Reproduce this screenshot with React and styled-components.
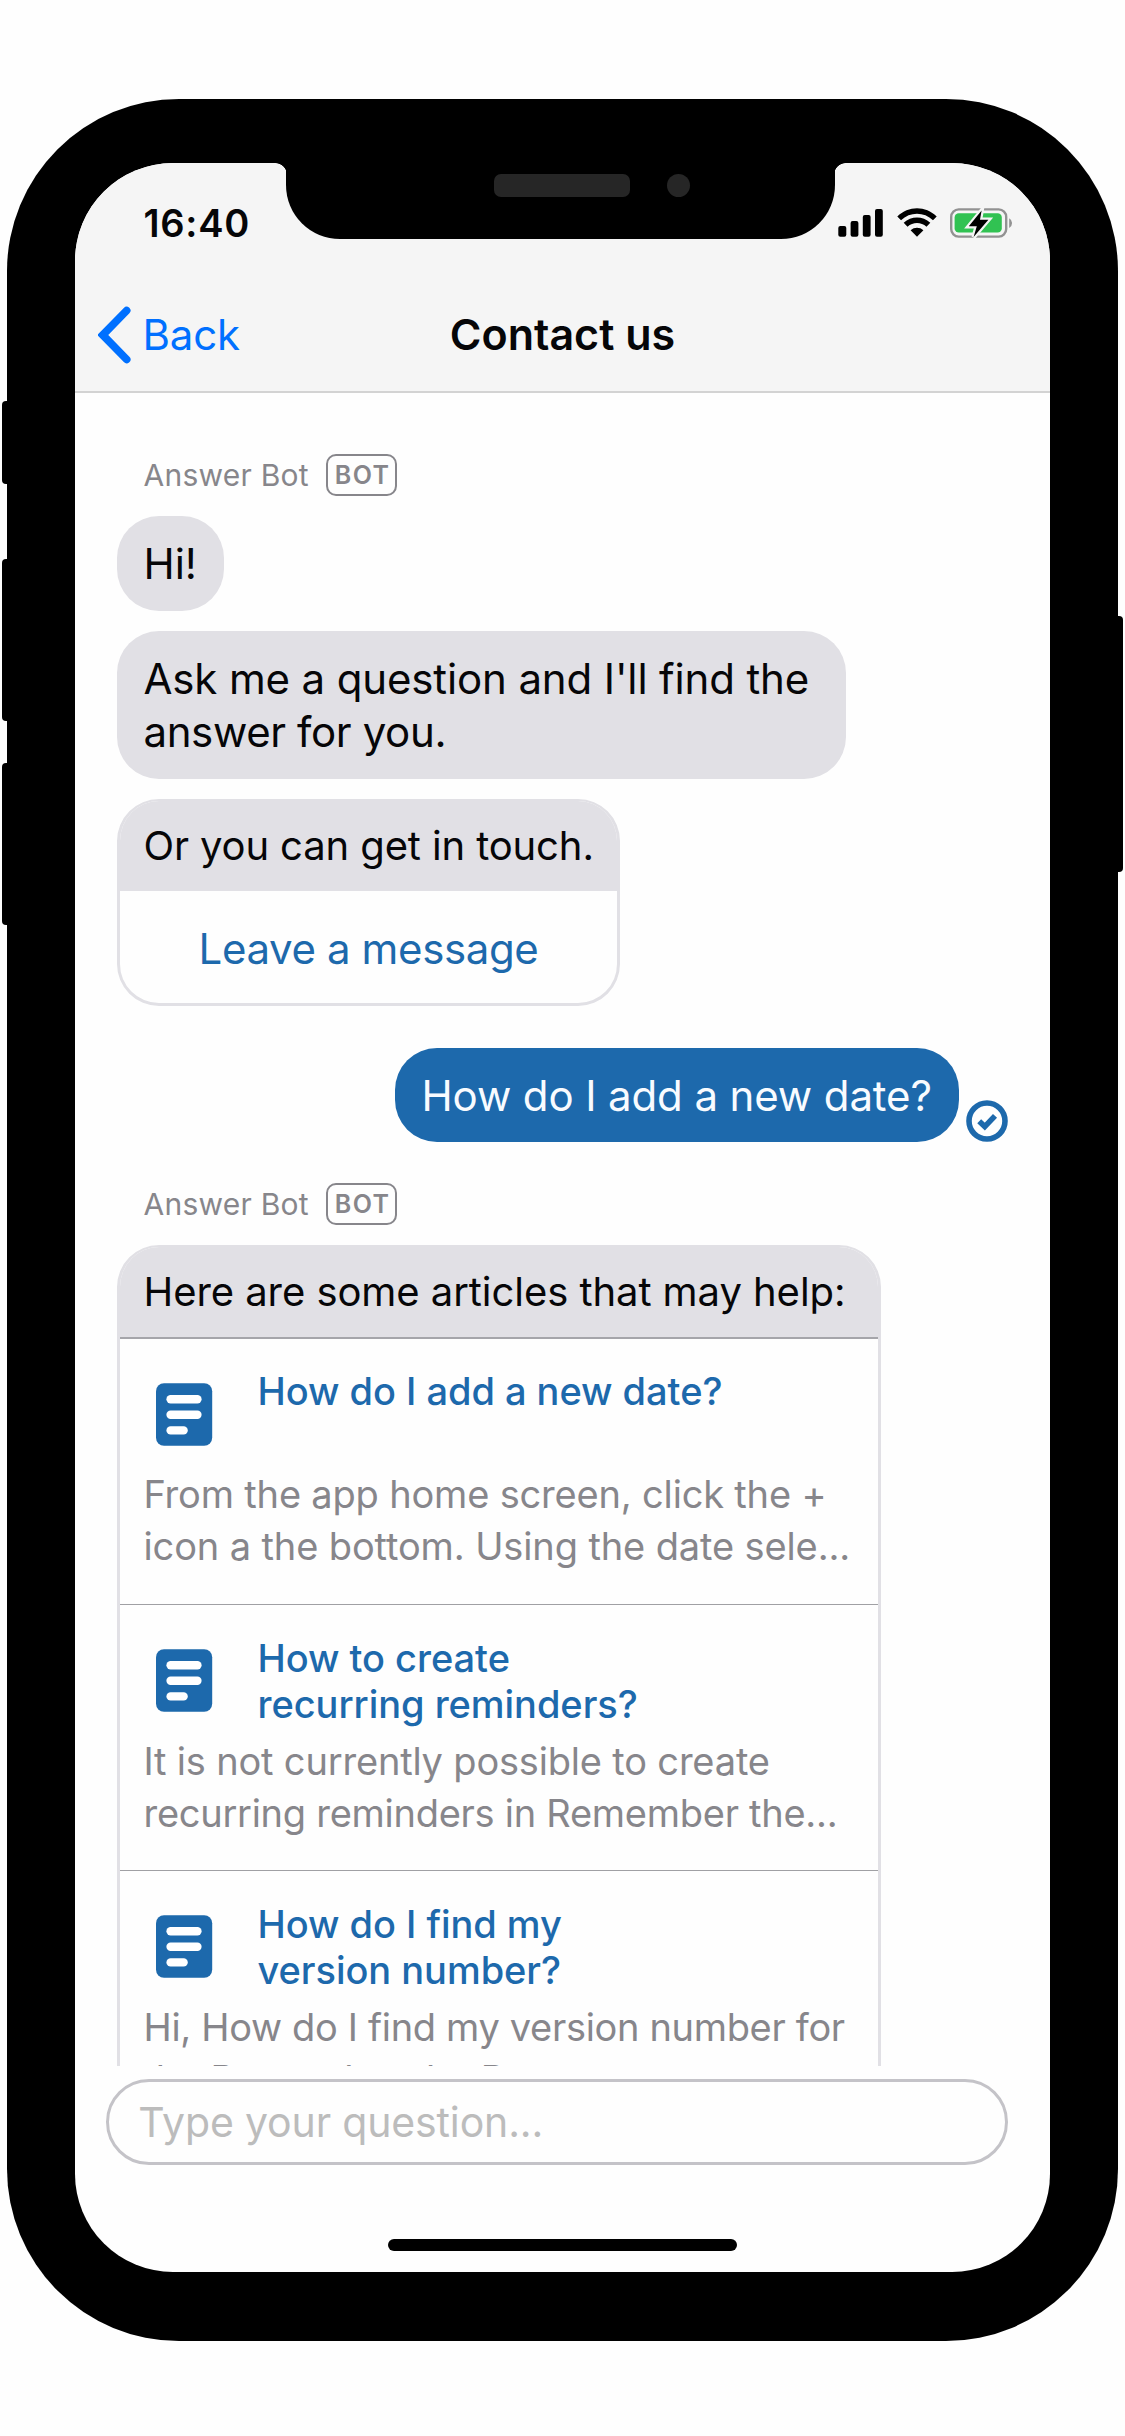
import React from "react";
import styled, { createGlobalStyle, css } from "styled-components";

const color = {
  ink: "#060608",
  link: "#1d69ac",
  system: "#0070ff",
  bubble: "#e1e0e5",
  muted: "#87868b",
  bar: "#f5f5f5",
  screen: "#fefefe",
};

const GlobalStyle = createGlobalStyle`
  *, *::before, *::after { box-sizing: border-box; }
  body {
    margin: 0;
    background: #fefefe;
    font-family: Inter, "Liberation Sans", sans-serif;
    color: ${color.ink};
  }
`;

/* ---------- device ---------- */

const Page = styled.main`
  display: flex;
  justify-content: center;
  align-items: flex-start;
  width: 1125px;
  height: 2436px;
  padding-top: 98.5px;
`;

const Phone = styled.div`
  position: relative;
  width: 1110.4px;
  height: 2242.5px;
  padding: 64.5px 68px 69px;
  background: #000;
  border-radius: 172px;
`;

const SideButton = styled.span`
  position: absolute;
  top: ${(p) => p.$top}px;
  ${(p) => p.$side}: -5.3px;
  width: 10px;
  height: ${(p) => p.$length}px;
  background: #000;
  border-radius: 4px;
`;

const Screen = styled.section`
  display: flex;
  flex-direction: column;
  height: 100%;
  background: ${color.screen};
  border-radius: 98px;
  overflow: hidden;
`;

/* ---------- top bar ---------- */

const TopBar = styled.header`
  flex: none;
  height: 230px;
  background: ${color.bar};
  border-bottom: 2px solid #d3d3d3;
`;

const StatusBar = styled.div`
  display: grid;
  grid-template-columns: 211.2px 548.5px 1fr;
  height: 95px;
`;

const Clock = styled.time`
  padding: 37px 0 0 68.2px;
  font-size: 38px;
  line-height: 46px;
  font-weight: 600;
  letter-spacing: 0.75px;
`;

const Notch = styled.div`
  position: relative;
  display: flex;
  gap: 37.5px;
  height: 75.5px;
  padding: 11px 0 0 208px;
  background: #000;
  border-radius: 0 0 54px 54px;

  &::before,
  &::after {
    content: "";
    position: absolute;
    top: 0;
    width: 12px;
    height: 12px;
  }
  &::before {
    left: -11.5px;
    background: radial-gradient(circle at 0 100%, transparent 11.5px, #000 12.2px);
  }
  &::after {
    right: -11.5px;
    background: radial-gradient(circle at 100% 100%, transparent 11.5px, #000 12.2px);
  }
`;

const Speaker = styled.span`
  width: 135.5px;
  height: 23px;
  border-radius: 7px;
  background: #262626;
`;

const Camera = styled.span`
  width: 23px;
  height: 23px;
  border-radius: 50%;
  background: #262626;
`;

const StatusIcons = styled.div`
  display: flex;
  align-items: flex-start;
  gap: 13px;
  padding: 45px 0 0 3.5px;

  svg {
    flex: none;
    display: block;
  }
`;

const NavBar = styled.nav`
  display: grid;
  grid-template-columns: 1fr auto 1fr;
  align-items: center;
  height: 133px;
  padding: 20px 22.7px 0;
`;

const BackLink = styled.a`
  display: flex;
  align-items: center;
  gap: 11.5px;
  color: ${color.system};
  font-size: 42px;
  line-height: 50px;
  letter-spacing: -0.2px;
`;

const NavTitle = styled.h1`
  margin: 0 0 1px;
  font-size: 43px;
  line-height: 49px;
  font-weight: 600;
  letter-spacing: 0;
`;

/* ---------- conversation ---------- */

const Conversation = styled.div`
  flex: none;
  display: flex;
  flex-direction: column;
  align-items: flex-start;
  height: 1673px;
  padding: 61px 41.7px 0;
  overflow: hidden;

  & > * {
    flex: none;
  }
`;

const Sender = styled.div`
  display: flex;
  align-items: center;
  gap: 17.5px;
  height: 41.5px;
  margin: ${(p) => (p.$later ? 41.5 : 0)}px 0 20.5px 26.5px;
  color: ${color.muted};
  font-size: 30px;
  line-height: 36px;
  letter-spacing: 0.25px;
`;

const BotTag = styled.span`
  width: 71px;
  height: 41.5px;
  border: 2.5px solid ${color.muted};
  border-radius: 10px;
  font-size: 25px;
  line-height: 38px;
  font-weight: 600;
  letter-spacing: 1.4px;
  text-indent: 1.4px;
  text-align: center;
`;

const bubbleText = css`
  font-size: 42px;
  line-height: 53px;
  white-space: nowrap;
`;

const Bubble = styled.div`
  ${bubbleText}
  width: ${(p) => (p.$width ? `${p.$width}px` : "auto")};
  padding: ${(p) => (p.$own ? "21.5px 26.5px 19.5px" : "20.5px 26.5px 21.5px")};
  background: ${(p) => (p.$own ? color.link : color.bubble)};
  color: ${(p) => (p.$own ? "#f8fbff" : color.ink)};
  border-radius: 42px;
  margin-bottom: ${(p) => (p.$own ? 0 : 20)}px;
  letter-spacing: ${(p) => (p.$own ? -0.12 : 0)}px;
`;

const Line = styled.span`
  display: block;
  letter-spacing: ${(p) => p.$tracking || 0}px;
  white-space: nowrap;
`;

const OwnRow = styled.div`
  display: flex;
  align-self: flex-end;
  align-items: flex-end;
  gap: 7px;
  height: 94px;
  margin-top: 42px;
`;

const Card = styled.article`
  width: ${(p) => p.$width}px;
  border: solid ${color.bubble};
  border-width: 2px 3px 3px;
  border-radius: 42px;
  overflow: hidden;
`;

const CardHeader = styled.div`
  height: ${(p) => p.$height}px;
  padding: 17.5px 23.5px 0;
  background: ${color.bubble};
  font-size: 40px;
  line-height: 53px;
  white-space: nowrap;
`;

const CardAction = styled.button`
  ${bubbleText}
  display: block;
  width: 100%;
  height: 111.5px;
  padding: 4px 0 0;
  border: 0;
  background: none;
  color: ${color.link};
  font-family: inherit;
  letter-spacing: -0.38px;
`;

const Article = styled.div`
  height: ${(p) => p.$height}px;
  padding: 29.5px 20px 0 23.5px;
  border-top: ${(p) => (p.$first ? 2 : 1)}px solid ${(p) => (p.$first ? "#a5a5aa" : "#a0a0a4")};
`;

const ArticleHead = styled.div`
  display: flex;
  align-items: flex-start;
  height: ${(p) => (p.$first ? 99.5 : 100.5)}px;

  svg {
    flex: none;
    margin: 14.5px 44px 0 13px;
  }
`;

const ArticleTitle = styled.h2`
  margin: ${(p) => (p.$first ? -0.5 : 0.5)}px 0 0;
  color: ${color.link};
  font-size: 38px;
  line-height: 46px;
  font-weight: 500;
`;

const Snippet = styled.p`
  margin: 0;
  color: ${color.muted};
  font-size: 38px;
  line-height: 52px;
`;

/* ---------- composer ---------- */

const Composer = styled.input`
  flex: none;
  height: 86px;
  margin: 13px 41.7px 0 31px;
  padding: 0 29px;
  border: 3px solid #c4c3c8;
  border-radius: 43px;
  background: transparent;
  font-family: inherit;
  font-size: 41px;
  letter-spacing: -0.15px;
  outline: none;

  &::placeholder {
    color: #bcbcbc;
    opacity: 1;
  }
`;

const HomeIndicator = styled.div`
  flex: none;
  align-self: center;
  width: 348.5px;
  height: 12.5px;
  margin-top: 73.5px;
  background: #000;
  border-radius: 7px;
`;

/* ---------- icons ---------- */

const SignalIcon = () => (
  <svg width="45.5" height="29" viewBox="0 0 45.5 29">
    <rect x="0.3" y="18" width="8" height="10.8" rx="2" />
    <rect x="12.6" y="13" width="7.8" height="15.8" rx="2" />
    <rect x="24.8" y="7" width="7.8" height="21.8" rx="2" />
    <rect x="37" y="1" width="7.8" height="27.8" rx="2" />
  </svg>
);

const WifiIcon = () => (
  <svg width="40" height="29" viewBox="0 0 40 29">
    <path d="M0.3 8.4 C11.4 -2.6 28.6 -2.6 39.7 8.4 L36 12.2 C27 3.6 13 3.6 4 12.2 Z" />
    <path d="M6.7 14.8 C14.2 7.8 25.8 7.8 33.3 14.8 L29.5 18.7 C24 13.7 16 13.7 10.5 18.7 Z" />
    <path d="M20 28.8 L13.6 22.3 C17.2 19 22.8 19 26.4 22.3 Z" />
  </svg>
);

const BatteryIcon = () => (
  <svg width="64" height="31" viewBox="0 0 64 31">
    <rect x="1.2" y="1.4" width="55" height="27.2" rx="7.5" fill="none" stroke="#929292" strokeWidth="2.4" />
    <path d="M59.2 10.2 a5.6 5.6 0 0 1 0 9.8 Z" fill="#929292" />
    <rect x="4.6" y="5.2" width="47.2" height="19.4" rx="4.2" fill="#31c252" />
    <path
      d="M31.6 2.6 L18.8 18.2 H26.8 L23.6 29 L38.4 11.8 H30 Z"
      fill="#000"
      stroke={color.bar}
      strokeWidth="4.4"
      paintOrder="stroke"
    />
  </svg>
);

const ChevronIcon = () => (
  <svg width="33" height="60" viewBox="0 0 33 60" fill="none">
    <path
      d="M28.6 5.6 L4.8 30 L28.6 54.4"
      stroke={color.system}
      strokeWidth="7.8"
      strokeLinecap="round"
      strokeLinejoin="miter"
    />
  </svg>
);

const DeliveredIcon = () => (
  <svg width="42" height="42" viewBox="0 0 42 42" fill="none" stroke={color.link}>
    <circle cx="21" cy="21" r="18" strokeWidth="5.6" />
    <path d="M13.2 21.2 L18.8 26.6 L29 15.8" strokeWidth="5.6" />
  </svg>
);

const DocumentIcon = () => (
  <svg width="57" height="63" viewBox="0 0 57 63">
    <rect x="0" y="0.2" width="56.2" height="62.6" rx="8" fill={color.link} />
    <g fill="#fff">
      <rect x="10.4" y="12" width="35.2" height="8.4" rx="4.2" />
      <rect x="10.4" y="27.6" width="35.2" height="8.4" rx="4.2" />
      <rect x="10.4" y="43.2" width="21.4" height="8.4" rx="4.2" />
    </g>
  </svg>
);

/* ---------- content ---------- */

const articles = [
  {
    title: ["How do I add a new date?"],
    snippet: [
      ["From the app home screen, click the +", -0.18],
      ["icon a the bottom. Using the date sele...", -0.12],
    ],
    height: 267,
  },
  {
    title: ["How to create", "recurring reminders?"],
    snippet: [
      ["It is not currently possible to create", -0.18],
      ["recurring reminders in Remember the...", -0.27],
    ],
    height: 266,
  },
  {
    title: ["How do I find my", "version number?"],
    snippet: [
      ["Hi, How do I find my version number for", -0.33],
      ["the Remember the Date app", -0.2],
    ],
    height: 267,
  },
];

const BotSender = ({ later }) => (
  <Sender $later={later}>
    Answer Bot
    <BotTag>BOT</BotTag>
  </Sender>
);

export default function App() {
  return (
    <>
      <GlobalStyle />
      <Page>
        <Phone>
          <SideButton $side="left" $top={302} $length={83} />
          <SideButton $side="left" $top={460.5} $length={162} />
          <SideButton $side="left" $top={664.5} $length={162} />
          <SideButton $side="right" $top={517.5} $length={256} />
          <Screen>
            <TopBar>
              <StatusBar>
                <Clock>16:40</Clock>
                <Notch>
                  <Speaker />
                  <Camera />
                </Notch>
                <StatusIcons>
                  <SignalIcon />
                  <WifiIcon />
                  <BatteryIcon />
                </StatusIcons>
              </StatusBar>
              <NavBar>
                <BackLink>
                  <ChevronIcon />
                  Back
                </BackLink>
                <NavTitle>Contact us</NavTitle>
              </NavBar>
            </TopBar>

            <Conversation>
              <BotSender />
              <Bubble $width={107}>Hi!</Bubble>
              <Bubble $width={729}>
                <Line $tracking={-0.14}>Ask me a question and I'll find the</Line>
                <Line $tracking={-0.38}>answer for you.</Line>
              </Bubble>
              <Card $width={503}>
                <CardHeader $height={90}>
                  <Line $tracking={-0.12}>Or you can get in touch.</Line>
                </CardHeader>
                <CardAction>Leave a message</CardAction>
              </Card>

              <OwnRow>
                <Bubble $own $width={564}>
                  How do I add a new date?
                </Bubble>
                <DeliveredIcon />
              </OwnRow>

              <BotSender later />
              <Card $width={764.5}>
                <CardHeader $height={90}>
                  <Line $tracking={-0.06}>Here are some articles that may help:</Line>
                </CardHeader>
                {articles.map((article, i) => (
                  <Article key={i} $first={i === 0} $height={article.height}>
                    <ArticleHead $first={i === 0}>
                      <DocumentIcon />
                      <ArticleTitle $first={i === 0}>
                        {article.title.map((text) => (
                          <Line key={text} $tracking={-0.04}>
                            {text}
                          </Line>
                        ))}
                      </ArticleTitle>
                    </ArticleHead>
                    <Snippet>
                      {article.snippet.map(([text, tracking]) => (
                        <Line key={text} $tracking={tracking}>
                          {text}
                        </Line>
                      ))}
                    </Snippet>
                  </Article>
                ))}
              </Card>
            </Conversation>

            <Composer placeholder="Type your question..." />
            <HomeIndicator />
          </Screen>
        </Phone>
      </Page>
    </>
  );
}
